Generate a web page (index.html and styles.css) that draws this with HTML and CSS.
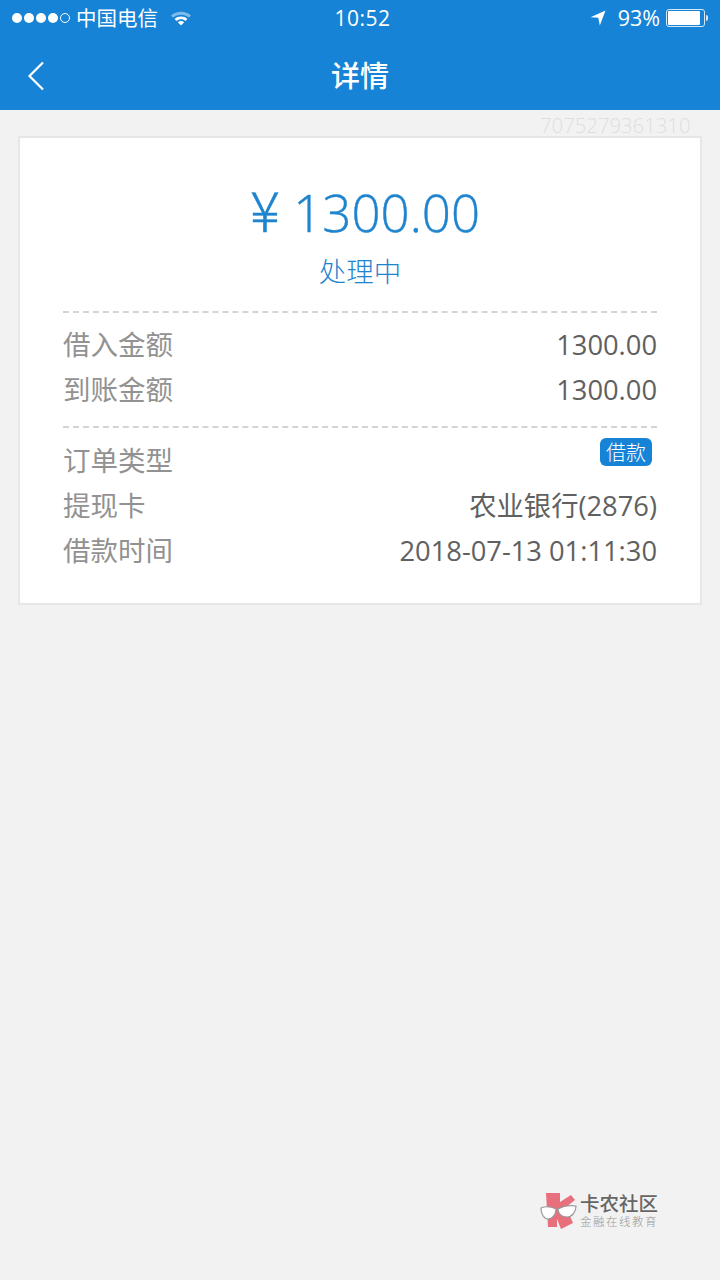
FILE: index.html
```html
<!DOCTYPE html>
<html>
	<head>
		<meta charset="UTF-8">
		<title>详情</title>
		<link rel="stylesheet" href="styles.css">
	</head>
	<body>
		<div class="head">
			<div class="status">
				<div class="status-left">
					<span class="dot"></span><span class="dot"></span><span class="dot"></span><span class="dot"></span><span class="dot dot-off"></span>
					<span class="carrier">中国电信</span>
					<svg class="wifi" width="22" height="16" viewBox="0 0 22 16">
						<path d="M1 5.5C6.5 .6 15.5 .6 21 5.5L19 7.6C14.500 3.700 7.500 3.700 3 7.600Z" fill="#fff" opacity=".45"/>
						<path d="M4.600 9C8.200 5.800 13.800 5.800 17.400 9L15.500 11C13 8.800 9 8.800 6.500 11Z" fill="#fff"/>
						<path d="M7.800 12.200C9.700 10.600 12.300 10.600 14.200 12.200L11 15.500Z" fill="#fff"/>
					</svg>
				</div>
				<div class="clock">10:52</div>
				<div class="status-right">
					<svg class="arrow" width="16" height="16" viewBox="0 0 16 16">
						<path d="M15.500 .5L9.800 15.500L8.300 7.700L.5 7.300Z" fill="#fff"/>
					</svg>
					<span class="percent">93%</span>
					<div class="battery"><div class="battery-fill"></div></div>
					<div class="battery-tip"></div>
				</div>
			</div>
			<div class="nav">
				<svg class="back" width="18" height="30" viewBox="0 0 18 30">
					<path d="M16 1.500L2.500 15L16 28.500" fill="none" stroke="#fff" stroke-width="2.200"/>
				</svg>
				<h1>详情</h1>
			</div>
		</div>

		<div class="serial">7075279361310</div>

		<div class="card">
			<div class="top">
				<div class="amount"><span class="yen">¥</span> 1300.00</div>
				<div class="state">处理中</div>
			</div>
			<div class="group">
				<div class="row"><span class="name">借入金额</span><span class="val">1300.00</span></div>
				<div class="row"><span class="name">到账金额</span><span class="val">1300.00</span></div>
			</div>
			<div class="group group-last">
				<div class="row"><span class="name">订单类型</span><span class="tag">借款</span></div>
				<div class="row"><span class="name">提现卡</span><span class="val">农业银行(2876)</span></div>
				<div class="row"><span class="name">借款时间</span><span class="val">2018-07-13 01:11:30</span></div>
			</div>
		</div>

		<div class="mark">
			<svg class="mark-logo" width="40" height="38" viewBox="0 0 40 38">
				<path d="M6 1H20V10L31 3L35 8L26 15L33 31L21 37L17 27V35H8Z" fill="#e8707c"/>
				<path d="M1 16C6 14 12 15 16 17C16 23 12 27 8 27C4 27 1 22 1 16Z" fill="#fff" stroke="#999" stroke-width="1.200"/>
				<path d="M18 17C23 14 30 13 36 14C36 20 32 25 27 25C22 25 18 22 18 17Z" fill="#fff" stroke="#999" stroke-width="1.200"/>
				<path d="M16 17.500H18" stroke="#999" stroke-width="1.200"/>
			</svg>
			<div class="mark-text">
				<div class="mark-name">卡农社区</div>
				<div class="mark-sub">金融在线教育</div>
			</div>
		</div>
	</body>
</html>
```

FILE: styles.css
```css
*{
	box-sizing: border-box;
}
html,body{
	margin: 0;
	padding: 0;
}
body{
	width: 720px;
	height: 1280px;
	background: #f2f2f2;
	font-family: "Liberation Sans", "Noto Sans CJK SC", sans-serif;
	position: relative;
	overflow: hidden;
}
.head{
	height: 110px;
	background: #1783d6;
	color: #fff;
}
.status{
	height: 38px;
	padding: 0 12px 3px;
	display: flex;
	align-items: center;
	justify-content: space-between;
	position: relative;
}
.status-left{
	display: flex;
	align-items: center;
}
.dot{
	width: 10px;
	height: 10px;
	border-radius: 50%;
	background: #fff;
	margin-right: 2px;
}
.dot-off{
	background: none;
	border: 1px solid #fff;
}
.carrier{
	font: 20.500px/35px "Noto Sans CJK SC", sans-serif;
	margin-left: 4px;
	margin-right: 12px;
}
.clock{
	position: absolute;
	left: 0;
	top: 0;
	width: 100%;
	padding-left: 5px;
	text-align: center;
	font: 500 21px/36px "Open Sans", sans-serif;
	letter-spacing: .5px;
}
.status-right{
	display: flex;
	align-items: center;
	position: relative;
	z-index: 1;
}
.arrow{
	margin-right: 12px;
}
.percent{
	font: 21.500px/35px "Open Sans", sans-serif;
	margin-right: 6px;
}
.battery{
	width: 39px;
	height: 18px;
	border: 1px solid #d5e9f8;
	border-radius: 3px;
	padding: 1px;
}
.battery-fill{
	width: 92%;
	height: 100%;
	background: #fff;
	border-radius: 1px;
}
.battery-tip{
	width: 2px;
	height: 6px;
	margin-left: 1px;
	background: #d5e9f8;
	border-radius: 0 2px 2px 0;
}
.nav{
	height: 72px;
	display: flex;
	align-items: center;
	justify-content: center;
	position: relative;
}
.back{
	position: absolute;
	left: 27px;
	top: 23px;
}
.nav h1{
	margin: 0;
	font: 500 29px/72px "Noto Sans CJK SC", sans-serif;
}
.serial{
	position: absolute;
	top: 113px;
	left: 540px;
	font: 300 20.300px/24px "Open Sans", sans-serif;
	color: #dedede;
}
.card{
	width: 684px;
	height: 469px;
	margin: 26px 0 0 18px;
	padding: 0 43px;
	background: #fff;
	border: 2px solid #e6e6e6;
}
.top{
	height: 173px;
	padding: 34px 0 0 10px;
	text-align: center;
	color: #1f84ce;
}
.amount{
	font: 300 51px/72px "Open Sans", sans-serif;
	height: 72px;
	-webkit-text-stroke: .4px #1f84ce;
}
.yen{
	font: 300 56px/72px "Noto Sans CJK SC", sans-serif;
}
.state{
	font: 300 27.500px/46px "Noto Sans CJK SC", sans-serif;
	margin: 3px 0 0 -10px;
}
.group{
	border-top: 2px dashed #d4d4d4;
	padding: 8px 0 15px;
}
.group-last{
	padding-top: 9px;
}
.row{
	height: 45px;
	display: flex;
	align-items: center;
	justify-content: space-between;
}
.name{
	font: 400 27.500px/45px "Noto Sans CJK SC", sans-serif;
	color: #929292;
}
.val{
	padding-top: 2px;
	font: 400 27.300px/45px "Open Sans", "Noto Sans CJK SC", sans-serif;
	color: #606060;
}
.tag{
	align-self: flex-start;
	margin: 1px 5px 0 0;
	width: 52px;
	height: 28px;
	background: #1783d6;
	border-radius: 6px;
	color: #fff;
	text-align: center;
	font: 300 20px/27px "Noto Sans CJK SC", sans-serif;
}
.mark{
	position: absolute;
	left: 540px;
	top: 1192px;
	display: flex;
}
.mark-text{
	padding-top: 1px;
}
.mark-name{
	font: 500 19.500px/20px "Noto Sans CJK SC", sans-serif;
	color: #666;
}
.mark-sub{
	margin-top: 3px;
	font: 300 11.500px/10px "Noto Sans CJK SC", sans-serif;
	color: #999;
	letter-spacing: 1.500px;
}
```
